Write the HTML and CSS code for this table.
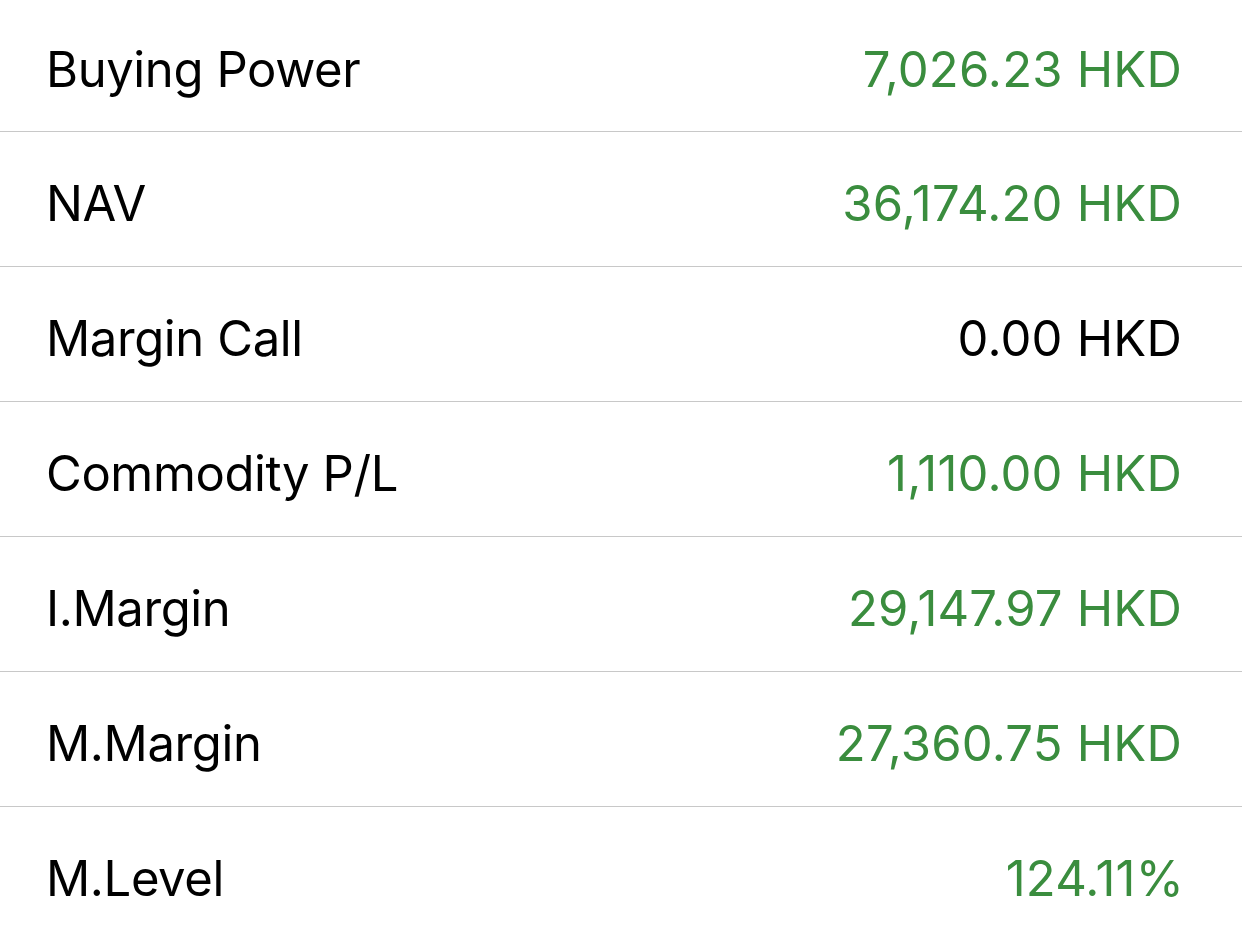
FILE: index.html
```html
<!DOCTYPE html>
<html>
<head>
<meta charset="utf-8">
<link rel="stylesheet" href="styles.css">
</head>
<body>
<div class="list">
  <div class="row first"><span class="label">Buying Power</span><span class="value pos">7,026.23 HKD</span></div>
  <div class="row"><span class="label">NAV</span><span class="value pos">36,174.20 HKD</span></div>
  <div class="row"><span class="label">Margin Call</span><span class="value">0.00 HKD</span></div>
  <div class="row"><span class="label">Commodity P/L</span><span class="value pos">1,110.00 HKD</span></div>
  <div class="row"><span class="label">I.Margin</span><span class="value pos">29,147.97 HKD</span></div>
  <div class="row"><span class="label">M.Margin</span><span class="value pos">27,360.75 HKD</span></div>
  <div class="row last"><span class="label">M.Level</span><span class="value pos pct">124.11%</span></div>
</div>
</body>
</html>
```

FILE: styles.css
```css
html, body {
  margin: 0;
  padding: 0;
  background: #ffffff;
}
body {
  font-family: Inter, "Liberation Sans", sans-serif;
  color: #000;
  overflow: hidden;
}
.list {
  display: flex;
  flex-direction: column;
}
.row {
  display: flex;
  justify-content: space-between;
  align-items: center;
  padding: 8px 60px 0 46px;
  box-sizing: content-box;
  border-bottom: 1px solid #c8c8c8;
  font-size: 49px;
  letter-spacing: -0.4px;
  height: 126px;
}
.row.first {
  height: 123px;
}
.row.last {
  border-bottom: none;
}
.value {
  color: #000;
  letter-spacing: 0.2px;
}
.value.pos {
  color: #3a8d3e;
}
.value.pct {
  margin-right: -2px;
}
```
